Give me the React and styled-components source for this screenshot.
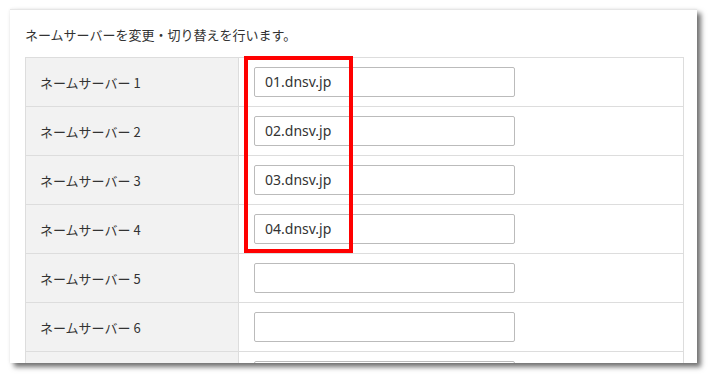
import React from 'react';
import styled, { createGlobalStyle } from 'styled-components';

const Global = createGlobalStyle`
  body {
    margin: 0;
    background: #fff;
    font-family: "Noto Sans CJK JP", "Noto Sans", sans-serif;
    color: #333;
  }
`;

const Page = styled.div`
  width: 709px;
  height: 374px;
  padding: 9px 0 0 10px;
  box-sizing: border-box;
`;

const Panel = styled.section`
  position: relative;
  width: 687px;
  height: 354px;
  box-sizing: border-box;
  background: #fff;
  border-top: 1px solid #e6e6e6;
  box-shadow: 4px 4px 5px rgba(0, 0, 0, 0.55), 0 0 3px rgba(0, 0, 0, 0.08);
  overflow: hidden;
  padding: 16px 0 0 15px;
`;

const Lead = styled.p`
  margin: 0 0 14px;
  font-size: 13px;
  line-height: 17px;
  color: #333;
`;

const Table = styled.div`
  width: 657px;
  border: 1px solid #ddd;
  border-bottom: none;
`;

const Row = styled.div`
  display: grid;
  grid-template-columns: 213px 1fr;
  height: 49px;
  border-bottom: 1px solid #ddd;
  box-sizing: border-box;
`;

const Label = styled.div`
  display: flex;
  align-items: center;
  padding-left: 14px;
  background: #f2f2f2;
  border-right: 1px solid #ddd;
  font-size: 13px;
  color: #333;
`;

const Cell = styled.div`
  display: flex;
  align-items: center;
  padding-left: 15px;
`;

const Field = styled.input`
  width: 261px;
  height: 30px;
  box-sizing: border-box;
  margin-bottom: 1px;
  border: 1px solid #bbb;
  border-radius: 2px;
  padding: 0 10px;
  font-family: "Noto Sans", "Noto Sans CJK JP", sans-serif;
  font-size: 14px;
  color: #333;
  background: #fff;
  outline: none;
`;

const Highlight = styled.div`
  position: absolute;
  left: 234px;
  top: 46px;
  width: 109px;
  height: 197px;
  box-sizing: border-box;
  border: 4px solid #f00;
  pointer-events: none;
`;

const servers = ['01.dnsv.jp', '02.dnsv.jp', '03.dnsv.jp', '04.dnsv.jp', '', '', ''];

export default function App() {
  return (
    <>
      <Global />
      <Page>
        <Panel>
          <Lead>ネームサーバーを変更・切り替えを行います。</Lead>
          <Table>
            {servers.map((s, i) => (
              <Row key={i}>
                <Label>{i < 6 ? `ネームサーバー ${i + 1}` : ''}</Label>
                <Cell>
                  <Field defaultValue={s} />
                </Cell>
              </Row>
            ))}
          </Table>
          <Highlight />
        </Panel>
      </Page>
    </>
  );
}
